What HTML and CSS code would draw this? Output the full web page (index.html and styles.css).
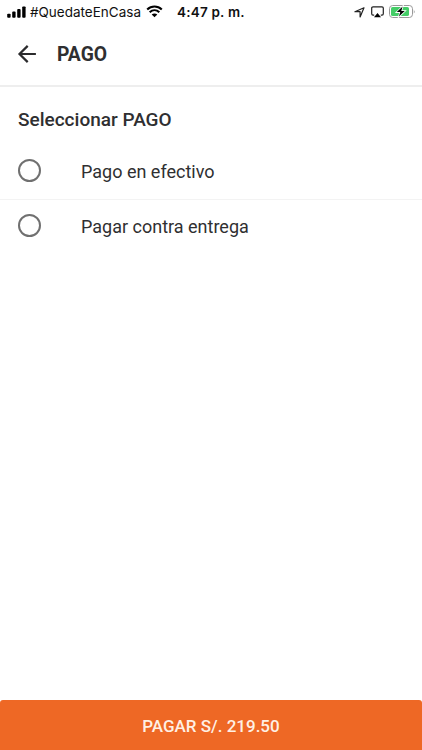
FILE: index.html
```html
<!DOCTYPE html>
<html lang="es">
<head>
    <meta charset="UTF-8">
    <meta name="viewport" content="width=device-width, initial-scale=1.0">
    <title>Pago</title>
    <link rel="stylesheet" href="styles.css">
</head>
<body>

<div class="status-bar">
    <svg class="signal" width="20" height="12" viewBox="0 0 20 12">
        <rect x=".2" y="7.7" width="3.4" height="4" rx=".9"/>
        <rect x="5.2" y="5.6" width="3.4" height="6.1" rx=".9"/>
        <rect x="10.2" y="3.1" width="3.4" height="8.6" rx=".9"/>
        <rect x="15.2" y=".4" width="3.4" height="11.3" rx=".9"/>
    </svg>
    <span class="carrier">#QuedateEnCasa</span>
    <svg class="wifi" width="17" height="13" viewBox="0 0 17 13">
        <path d="M1.2 4.5c4.2-4 10.4-4 14.6 0M3.7 7.3c2.8-2.7 6.8-2.7 9.6 0" fill="none" stroke="#000" stroke-width="2.1"/>
        <path d="M5.7 9.5c1.6-1.5 4-1.5 5.6 0l-2.8 2.8z"/>
    </svg>
    <span class="time">4:47 p. m.</span>
    <div class="status-icons">
        <svg width="12" height="12" viewBox="0 0 12 12">
            <path d="M.9 5.7L10 1.8 6.1 10.9V5.7z" fill="none" stroke="#222" stroke-width="1.2" stroke-linejoin="round"/>
        </svg>
        <svg width="13" height="12" viewBox="0 0 13 12">
            <path d="M3.2 9.1H2Q.7 9.1.7 7.8V2.1Q.7.9 2 .9h9q1.3 0 1.3 1.2v5.7q0 1.3-1.3 1.3H9.8" fill="none" stroke="#222" stroke-width="1.2"/>
            <path d="M6.5 7l3.5 4.2H3z"/>
        </svg>
        <svg width="27" height="13" viewBox="0 0 27 13">
            <rect x=".5" y=".5" width="23" height="12" rx="3.2" fill="#fff" stroke="#999"/>
            <rect x="2" y="2" width="18" height="9" rx="1.6" fill="#44cd67"/>
            <path d="M24.8 4.5q1.6 2 0 4z" fill="#999"/>
            <path d="M13.6 1.6L7.8 7.1h3.5L9.9 11.6 15.8 6h-3.5z" stroke="#fff" stroke-width="1.6" paint-order="stroke"/>
        </svg>
    </div>
</div>

<div class="header">
    <button class="back" aria-label="Volver">
        <svg width="20" height="20" viewBox="0 0 20 20">
            <path d="M18.9 10H2.5M10.7 1.9L2.5 10l8.2 8.1" fill="none" stroke="#2b2b2d" stroke-width="2.2"/>
        </svg>
    </button>
    <h1>PAGO</h1>
</div>

<div class="content">
    <h2>Seleccionar PAGO</h2>
    <label class="option">
        <input type="radio" name="pago">
        <span>Pago en efectivo</span>
    </label>
    <label class="option">
        <input type="radio" name="pago">
        <span>Pagar contra entrega</span>
    </label>
</div>

<button class="pay">PAGAR S/. 219.50</button>

</body>
</html>
```
FILE: styles.css
```css
body {
    margin: 0;
    height: 100vh;
    display: flex;
    flex-direction: column;
    background-color: #fff;
    color: #2f2f31;
    font-family: Roboto, sans-serif;
    overflow: hidden;
}

button {
    border: none;
    padding: 0;
    font-family: inherit;
    cursor: pointer;
}

.status-bar {
    display: flex;
    align-items: center;
    height: 24px;
    box-sizing: border-box;
    padding: 0 6px 1px 7px;
    font-family: Inter, sans-serif;
    color: #111;
    white-space: nowrap;
}

.carrier {
    width: 111px;
    margin-left: 3px;
    font-size: 13.5px;
}

.wifi {
    margin-left: 5px;
}

.time {
    margin-left: 14px;
    font-size: 13.5px;
    font-weight: 600;
    letter-spacing: 0.2px;
}

.status-icons {
    display: flex;
    align-items: center;
    gap: 5px;
    margin-left: auto;
}

.header {
    display: flex;
    align-items: center;
    height: 59px;
    padding: 0 0 2px 17px;
    border-bottom: 2px solid #eee;
}

.back {
    display: flex;
    background: none;
}

.header h1 {
    margin: 2px 0 0 20px;
    font-size: 19.3px;
    font-weight: 700;
}

.content {
    flex: 1;
}

.content h2 {
    margin: 21px 0 12px 18px;
    font-size: 19px;
    line-height: 24px;
    font-weight: 500;
}

.option {
    display: flex;
    align-items: center;
    height: 55px;
    padding-left: 18px;
    font-size: 18px;
}

.option + .option {
    height: 52px;
    border-top: 1px solid #f3f3f3;
}

.option input {
    appearance: none;
    width: 23px;
    height: 23px;
    margin: 0 40px 2px 0;
    border: 2px solid #707070;
    border-radius: 50%;
    box-sizing: border-box;
}

.option input:checked {
    background: radial-gradient(#ee6825 50%, transparent 55%);
}

.pay {
    height: 50px;
    padding-top: 2px;
    border-radius: 3px 3px 0 0;
    background-color: #ee6825;
    color: #fff0e4;
    font-size: 17px;
    font-weight: 500;
}
```
